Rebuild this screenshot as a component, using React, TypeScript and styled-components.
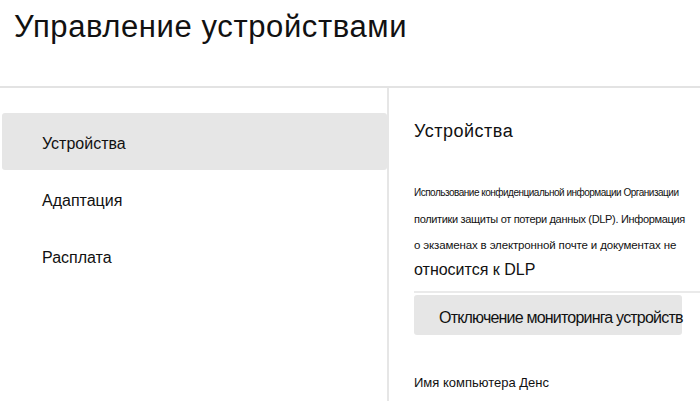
import React from 'react';
import styled, {createGlobalStyle} from 'styled-components';

const GlobalStyle = createGlobalStyle`
  html, body {
    margin: 0;
    padding: 0;
    background: #fff;
    font-family: "Liberation Sans", Arial, sans-serif;
    color: #111;
  }
`;

const Page = styled.div`
  width: 700px;
  height: 401px;
  overflow: hidden;
  display: flex;
  flex-direction: column;
`;

const Header = styled.header`
  height: 88px;
  border-bottom: 2px solid #e3e3e3;
  padding: 9px 0 0 14px;
  box-sizing: border-box;

  h1 {
    margin: 0;
    font-size: 31px;
    font-weight: 400;
    letter-spacing: 0.6px;
  }
`;

const Body = styled.div`
  flex: 1;
  display: grid;
  grid-template-columns: 387px 1fr;
`;

const Nav = styled.nav`
  padding: 25px 0 0 2px;
  display: flex;
  flex-direction: column;
`;

const NavItem = styled.div<{ $active?: boolean }>`
  height: 57px;
  box-sizing: border-box;
  padding: 5px 0 0 40px;
  display: flex;
  align-items: center;
  font-size: 16px;
  border-radius: 3px;
  background: ${p => (p.$active ? '#e6e6e6' : 'transparent')};
`;

const Content = styled.section`
  border-left: 2px solid #e6e6e6;
  padding: 32px 0 0 25px;
  display: flex;
  flex-direction: column;
`;

const Heading = styled.h2`
  margin: 0;
  font-size: 18px;
  line-height: 22px;
  font-weight: 400;
  letter-spacing: 0.5px;
`;

const Note = styled.div`
  margin-top: 38px;
  display: flex;
  flex-direction: column;
`;

const NoteLine = styled.span<{ $size: number; $spacing: number }>`
  display: block;
  height: 26px;
  line-height: 26px;
  font-size: ${p => p.$size}px;
  letter-spacing: ${p => p.$spacing}px;
  white-space: nowrap;
`;

const NoteTail = styled.div`
  margin-top: 1px;
  font-size: 16px;
  line-height: 22px;
  padding-bottom: 10px;
  border-bottom: 2px solid #eaeaea;
`;

const ActionButton = styled.button`
  margin-top: 2px;
  width: 268px;
  height: 40px;
  border: none;
  border-radius: 3px;
  background: #e6e6e6;
  font-family: inherit;
  font-size: 16px;
  letter-spacing: -0.8px;
  color: #111;
  text-align: left;
  padding: 6px 0 0 25px;
  white-space: nowrap;
  overflow: visible;
`;

const DeviceName = styled.div`
  margin-top: 40px;
  font-size: 13px;
  line-height: 15px;
`;

export default function App() {
  return (
    <Page>
      <GlobalStyle/>
      <Header>
        <h1>Управление устройствами</h1>
      </Header>
      <Body>
        <Nav>
          <NavItem $active>Устройства</NavItem>
          <NavItem>Адаптация</NavItem>
          <NavItem>Расплата</NavItem>
        </Nav>
        <Content>
          <Heading>Устройства</Heading>
          <Note>
            <NoteLine $size={10} $spacing={-0.5}>Использование конфиденциальной информации Организации</NoteLine>
            <NoteLine $size={11} $spacing={-0.33}>политики защиты от потери данных (DLP). Информация</NoteLine>
            <NoteLine $size={11.5} $spacing={-0.14}>о экзаменах в электронной почте и документах не</NoteLine>
          </Note>
          <NoteTail>относится к DLP</NoteTail>
          <ActionButton>Отключение мониторинга устройств</ActionButton>
          <DeviceName>Имя компьютера Денс</DeviceName>
        </Content>
      </Body>
    </Page>
  );
}
